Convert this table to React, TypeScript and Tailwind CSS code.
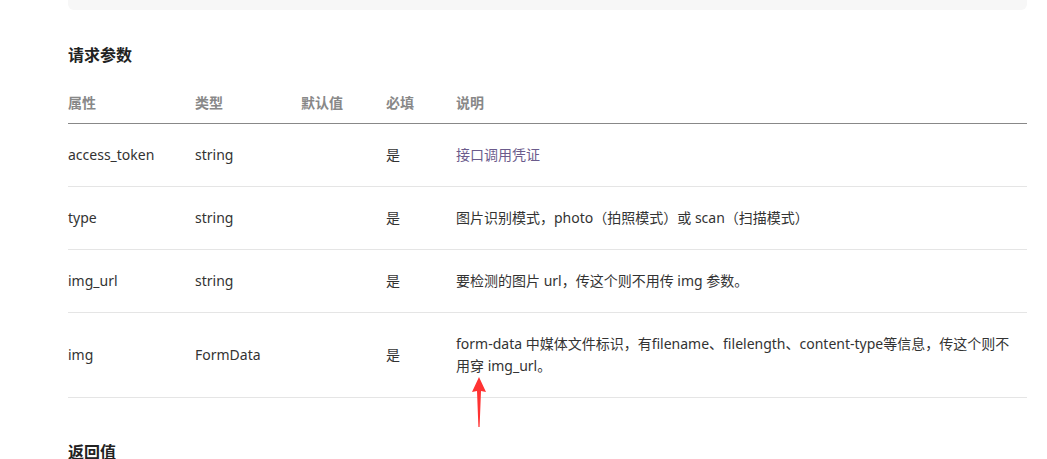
import React from 'react';

interface Param {
  name: string;
  type: string;
  def: string;
  required: string;
  desc: React.ReactNode;
  link?: boolean;
}

const PARAMS: Param[] = [
  { name: 'access_token', type: 'string', def: '', required: '是', desc: '接口调用凭证', link: true },
  { name: 'type', type: 'string', def: '', required: '是', desc: '图片识别模式，photo（拍照模式）或 scan（扫描模式）' },
  { name: 'img_url', type: 'string', def: '', required: '是', desc: '要检测的图片 url，传这个则不用传 img 参数。' },
  {
    name: 'img',
    type: 'FormData',
    def: '',
    required: '是',
    desc: (
      <>
        form-data 中媒体文件标识，有filename、filelength、content-type等信息，传这个则不
        <br />
        用穿 img_url。
      </>
    ),
  },
];

const FONT = { fontFamily: '"Noto Sans", "Noto Sans CJK SC", sans-serif' };

const App: React.FC = () => {
  return (
    <div className="w-[1047px] h-[459px] overflow-hidden bg-white pl-[68px] pr-[20px] text-[#333] text-[14px]" style={FONT}>
      {/* previous code block tail */}
      <div className="h-[10px] bg-[#f7f7f7] rounded-b-md" />

      <h2 className="mt-[33px] text-[16px] leading-[24px] font-bold text-[#222]">请求参数</h2>

      <div className="relative mt-[25px]">
        {/* header */}
        <div className="flex border-b border-[#888] pb-[9px] leading-[22px] font-bold text-[#888]">
          <div className="w-[127px]">属性</div>
          <div className="w-[106px]">类型</div>
          <div className="w-[85px]">默认值</div>
          <div className="w-[70px]">必填</div>
          <div className="flex-1">说明</div>
        </div>

        {PARAMS.map(p => (
          <div key={p.name} className="flex items-center border-b border-[#e5e5e5] py-[20px] leading-[22px]">
            <div className="w-[127px]">{p.name}</div>
            <div className="w-[106px]">{p.type}</div>
            <div className="w-[85px]">{p.def}</div>
            <div className="w-[70px]">{p.required}</div>
            <div className={`flex-1 ${p.link ? 'text-[#6b5b8c]' : ''}`}>{p.desc}</div>
          </div>
        ))}

        {/* red annotation arrow */}
        <svg className="absolute left-[403px] top-[285px]" width="16" height="50" viewBox="0 0 16 50">
          <path d="M8 0 L15 15 L10 14 L8.6 50 L7.4 50 L6 14 L1 15 Z" fill="#ff3333" />
        </svg>
      </div>

      <h2 className="mt-[42px] text-[16px] leading-[24px] font-bold text-[#222]">返回值</h2>
    </div>
  );
};

export default App;
